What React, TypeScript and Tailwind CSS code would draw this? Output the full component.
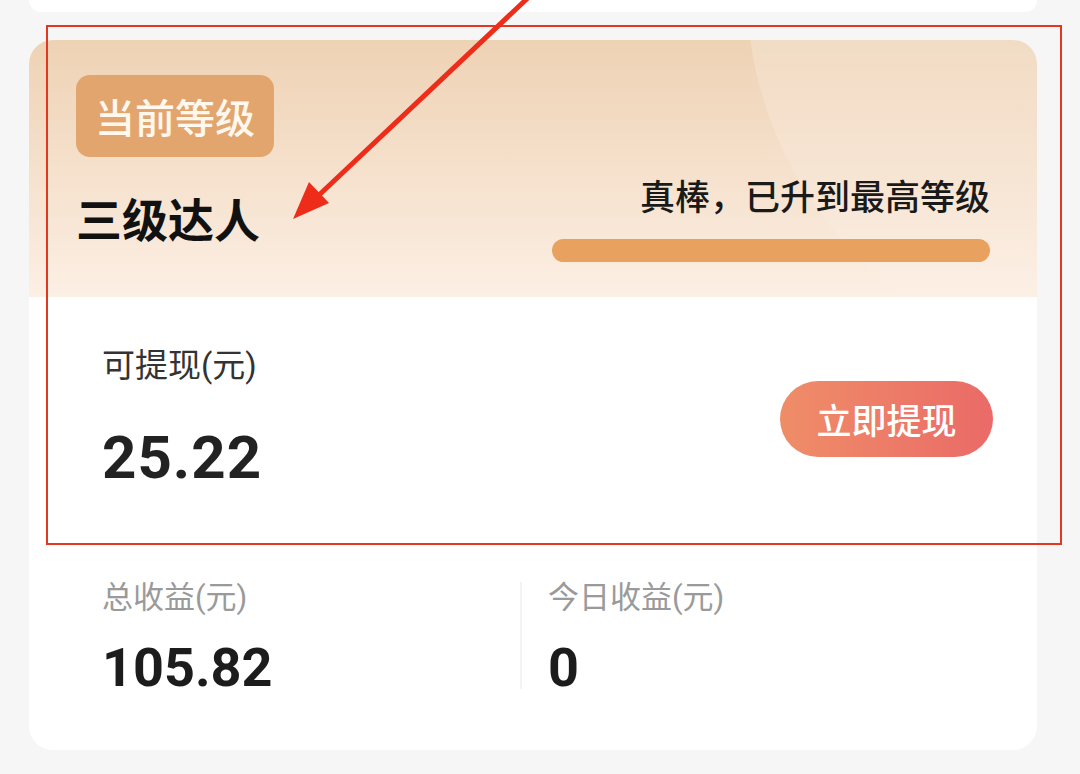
import React from "react";

export default function App() {
  return (
    <div className="relative w-[1080px] h-[774px] overflow-hidden bg-[#f6f6f6] font-['Roboto','Noto_Sans_CJK_SC',sans-serif]">
      <div className="flex flex-col pl-[29px] pr-[43px]">
        <div className="h-[12px] bg-white rounded-b-[20px]" />
        <div className="mt-[28px] h-[710px] bg-white rounded-[24px] overflow-hidden flex flex-col">
          {/* header */}
          <div className="relative h-[257px] shrink-0 overflow-hidden bg-linear-to-b from-[#eed2b4] to-[#fcefe4]">
            <div className="absolute left-[718px] top-[-425px] w-[750px] h-[750px] rounded-full bg-linear-to-b from-white/45 via-white/25 to-white/0" />
            <div className="relative flex justify-between px-[47px] h-full">
              <div className="flex flex-col pt-[35px]">
                <div className="w-[198px] h-[82px] rounded-[14px] bg-[#e3a56e] flex items-center justify-center text-[40px] leading-none font-medium text-[#fff8ef] font-['Noto_Sans_CJK_SC',sans-serif]">
                  当前等级
                </div>
                <div className="mt-[37px] text-[46px] leading-none font-bold text-[#111] font-['Noto_Sans_CJK_SC',sans-serif]">
                  三级达人
                </div>
              </div>
              <div className="flex flex-col items-end justify-end pb-[35px]">
                <div className="text-[35px] leading-none font-medium text-[#1a1a1a] font-['Noto_Sans_CJK_SC',sans-serif]">
                  真棒，已升到最高等级
                </div>
                <div className="mt-[27px] w-[438px] h-[23px] rounded-full bg-[#e8a15e]" />
              </div>
            </div>
          </div>
          {/* withdraw */}
          <div className="flex items-center justify-between pl-[73px] pr-[44px] pt-[52px]">
            <div className="flex flex-col">
              <div className="text-[33px] leading-none text-[#333]">可提现(元)</div>
              <div className="mt-[46px] text-[60px] leading-none font-bold text-[#222] tracking-[1px]">25.22</div>
            </div>
            <div className="w-[213px] h-[76px] rounded-full bg-linear-to-r from-[#ef8d68] to-[#ea6a67] flex items-center justify-center text-[35px] leading-none font-medium text-white font-['Noto_Sans_CJK_SC',sans-serif]">
              立即提现
            </div>
          </div>
          {/* stats */}
          <div className="mt-[94px] grid grid-cols-[493px_1fr]">
            <div className="pl-[73px] border-r-2 border-[#f3f3f3] flex flex-col h-[107px]">
              <div className="text-[31px] leading-none text-[#9a9a9a]">总收益(元)</div>
              <div className="mt-[28px] text-[54px] leading-none font-bold text-[#1c1c1c]">105.82</div>
            </div>
            <div className="pl-[26px] flex flex-col">
              <div className="text-[31px] leading-none text-[#9a9a9a]">今日收益(元)</div>
              <div className="mt-[28px] text-[54px] leading-none font-bold text-[#1c1c1c]">0</div>
            </div>
          </div>
        </div>
      </div>

      {/* annotation rectangle */}
      <div className="absolute left-[46px] top-[25px] w-[1016px] h-[520px] border-[2px] border-[#e3381f] pointer-events-none" />
      {/* annotation arrow */}
      <svg className="absolute left-0 top-0 pointer-events-none" width="1080" height="774">
        <line x1="532" y1="-6" x2="318" y2="196" stroke="#ee2c1a" strokeWidth="5" strokeLinecap="round" />
        <polygon points="293,219 329,203 309,182" fill="#ee2c1a" />
      </svg>
    </div>
  );
}
